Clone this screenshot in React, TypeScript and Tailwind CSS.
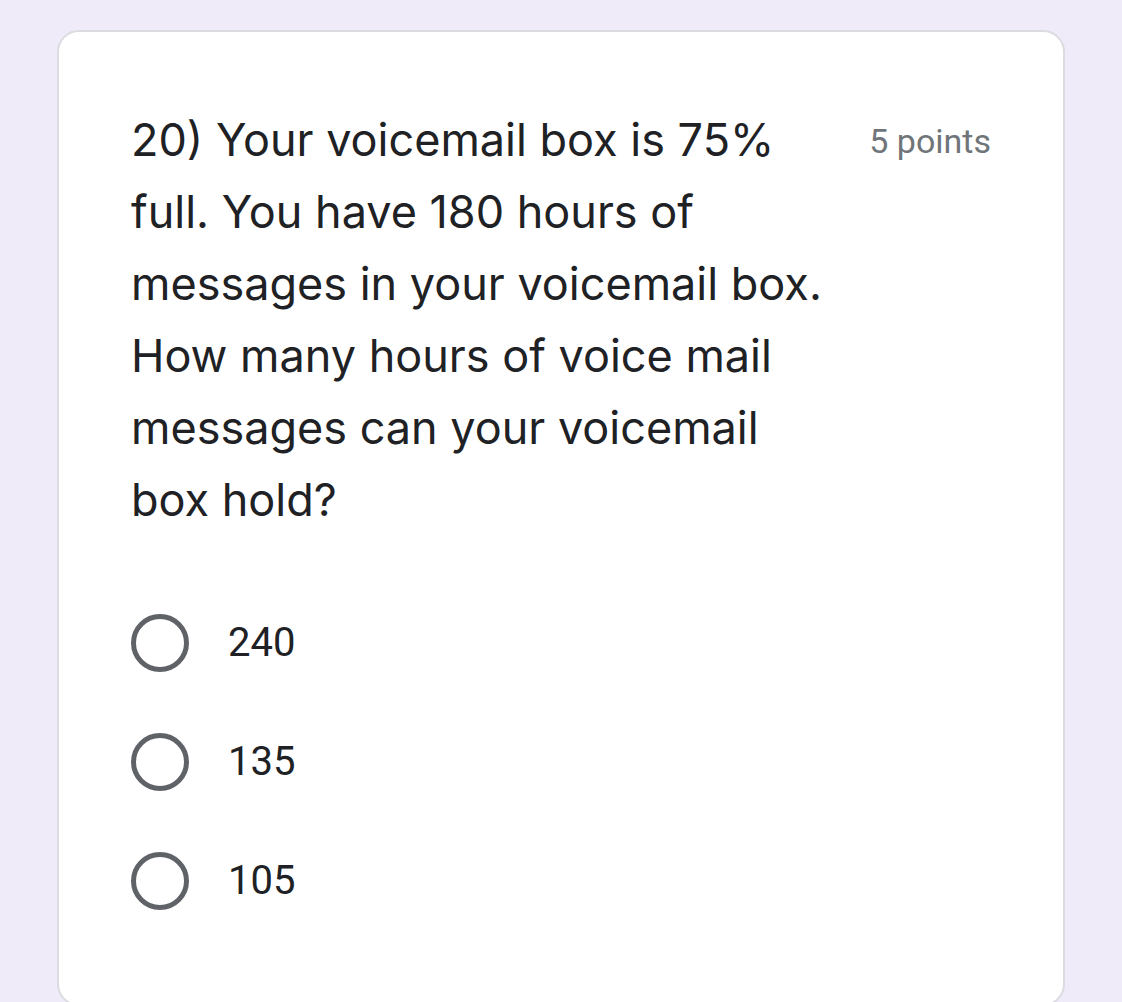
const options = ["240", "135", "105"];

function Radio() {
  return (
    <span className="block w-[58px] h-[58px] shrink-0 rounded-full border-[5px] border-[#5f6368]" />
  );
}

export default function App() {
  return (
    <div className="h-[1002px] overflow-hidden bg-[#f0ebf8] pt-[30px] pl-[57px] pr-[57px]">
      <div className="h-[976px] rounded-[22px] border-2 border-[#dadce0] bg-white pl-[72px] pr-[72px] pt-[72px]">
        {/* Question header */}
        <div className="flex items-start justify-between gap-6">
          <h2 className="w-[710px] text-[45px] leading-[72px] text-[#202124] font-['Inter',sans-serif] font-normal">
            20) Your voicemail box is 75% full. You have 180 hours of messages in your voicemail box. How many hours of voice mail messages can your voicemail box hold?
          </h2>
          <span className="shrink-0 pt-[19px] text-[34px] leading-[36px] text-[#70757a] font-['Roboto',sans-serif]">
            5 points
          </span>
        </div>

        {/* Choices */}
        <div className="mt-[78px] flex flex-col gap-[61px]">
          {options.map((opt) => (
            <label key={opt} className="flex items-center gap-[39px]">
              <Radio />
              <span className="text-[40px] leading-[58px] text-[#202124] font-['Roboto',sans-serif]">
                {opt}
              </span>
            </label>
          ))}
        </div>
      </div>
    </div>
  );
}
